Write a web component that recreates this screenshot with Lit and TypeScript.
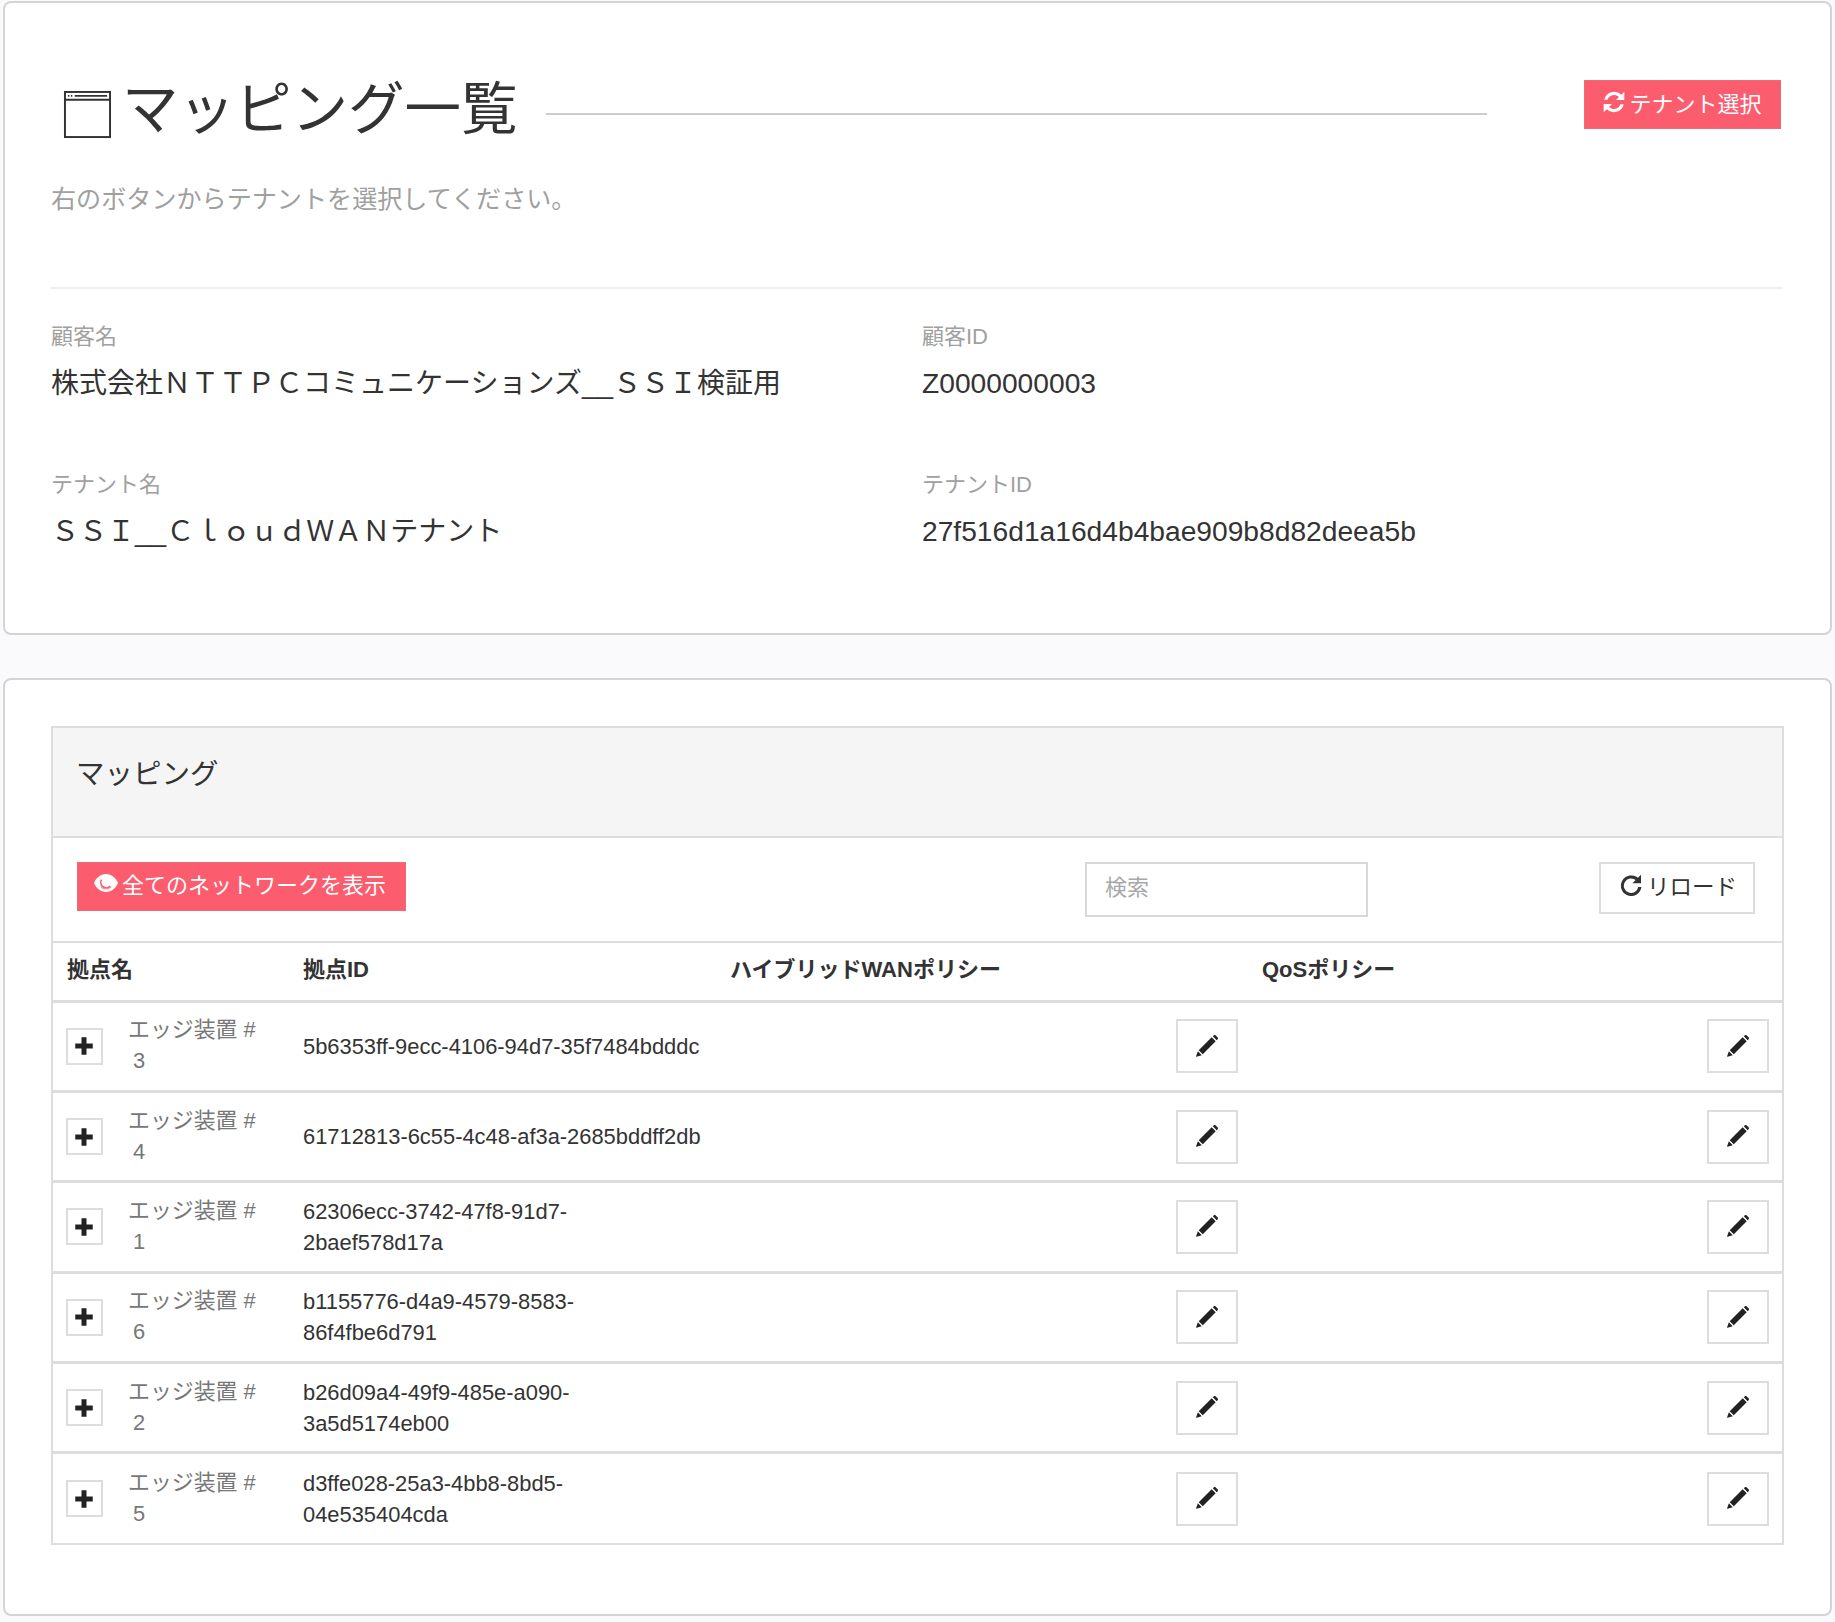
import { LitElement, html, css, svg } from 'lit'
import { customElement } from 'lit/decorators.js'

const rows = [
  { no: '3', id: ['5b6353ff-9ecc-4106-94d7-35f7484bdddc'] },
  { no: '4', id: ['61712813-6c55-4c48-af3a-2685bddff2db'] },
  { no: '1', id: ['62306ecc-3742-47f8-91d7-', '2baef578d17a'] },
  { no: '6', id: ['b1155776-d4a9-4579-8583-', '86f4fbe6d791'] },
  { no: '2', id: ['b26d09a4-49f9-485e-a090-', '3a5d5174eb00'] },
  { no: '5', id: ['d3ffe028-25a3-4bb8-8bd5-', '04e535404cda'] },
]

const pencil = svg`<path d="M11.6 1.6 14.4 4.4 5.4 13.4 2.6 10.6ZM12.4.8 13 .3c.4-.4 1-.4 1.4 0l1.3 1.3c.4.4.4 1 0 1.4l-.6.6ZM2 11.3 4.7 14 1 15.2.7 14.9Z" fill="currentColor"/>`
const plus = svg`<path d="M6 1h4v5h5v4h-5v5H6v-5H1V6h5Z" fill="currentColor"/>`
const refresh = svg`<path d="M13.3 2.7 15.5.5v6h-6l2.100-2.100A5 5 0 0 0 3.300 6.300H.9a7.400 7.400 0 0 1 12.400-3.600ZM2.700 13.300.5 15.500v-6h6l-2.100 2.100a5 5 0 0 0 8.300-1.900h2.400a7.400 7.400 0 0 1-12.400 3.600Z" fill="currentColor"/>`
const eye = svg`<path d="M8 2c3.700 0 6.700 2.700 8 6-1.300 3.300-4.300 6-8 6S1.300 11.300 0 8c1.300-3.300 4.300-6 8-6Z" fill="currentColor"/><path d="M5 5.800a3.600 3.600 0 0 0 5.800 4.200" fill="none" stroke="#fb5c6e" stroke-width="1.100"/><path d="M4.400 10.500a5 5 0 0 0 7.200 0" fill="none" stroke="#fb5c6e" stroke-width=".5"/>`
const reload = svg`<path d="M13 2.800 15.300.5v6.300H9l2.400-2.400A5.300 5.300 0 1 0 13.300 9.500h2.300A7.500 7.500 0 1 1 13 2.800Z" fill="currentColor"/>`

@customElement('app-root')
export class AppRoot extends LitElement {
  static styles = css`
    :host {
      display: block;
      width: 1835px;
      height: 1622px;
      box-sizing: border-box;
      padding: 1px 3px 0 3px;
      background: #fafafc;
      color: #333;
      font-family: 'Liberation Sans', 'Noto Sans CJK JP', sans-serif;
      font-size: 22px;
    }

    .card {
      box-sizing: border-box;
      background: #fff;
      border: 2px solid #d4d4d4;
      border-radius: 8px;
    }

    .summary {
      height: 634px;
      margin-bottom: 43px;
      padding: 77px 47px 0 46px;
    }

    .title-row {
      display: flex;
      align-items: center;
      height: 62px;
    }

    .page-icon {
      width: 49px;
      height: 49px;
      margin: 7px 0 0 12px;
      flex: none;
      color: #333;
    }

    h1 {
      margin: -3px 0 0 10px;
      font-size: 56.500px;
      font-weight: 400;
      line-height: 62px;
      white-space: nowrap;
    }

    .rule {
      width: 941px;
      height: 2px;
      margin: 6px 0 0 28px;
      background: #ccc;
    }

    .btn {
      display: flex;
      align-items: center;
      box-sizing: border-box;
      height: 49px;
      padding-bottom: 4px;
      font-size: 22px;
      white-space: nowrap;
    }

    .btn svg {
      width: 22px;
      height: 22px;
      flex: none;
      margin-right: 3px;
    }

    .primary {
      background: #fb5c6e;
      color: #fff;
      border: 1px solid #ef6a78;
    }

    .tenant {
      width: 197px;
      margin: -14px 0 0 97px;
      padding-left: 18px;
    }

    .tenant svg {
      margin-right: 5px;
    }

    .hint {
      margin: 39px 0 0;
      color: #a0a0a0;
      font-size: 25.100px;
      line-height: 36px;
    }

    hr {
      margin: 70px 0 0;
      border: 0;
      border-top: 2px solid #eee;
    }

    .facts {
      display: grid;
      grid-template-columns: 871px 1fr;
      row-gap: 68px;
      margin-top: 32px;
    }

    .fact-label {
      color: #a0a0a0;
      font-size: 22px;
      line-height: 32px;
    }

    .fact-value {
      margin-top: 14px;
      color: #333;
      font-size: 28px;
      line-height: 34px;
      white-space: nowrap;
    }

    .fact-value.latin {
      margin-top: 13px;
      font-size: 28.200px;
    }

    .mapping {
      height: 938px;
      padding: 46px 46px 0 46px;
    }

    .panel {
      border: 2px solid #ddd;
    }

    h2 {
      box-sizing: border-box;
      height: 110px;
      margin: 0;
      padding: 26px 23px 0;
      background: #f5f5f5;
      border-bottom: 2px solid #ddd;
      font-size: 28.500px;
      font-weight: 400;
      line-height: 40px;
    }

    .toolbar {
      display: flex;
      align-items: flex-start;
      box-sizing: border-box;
      height: 103px;
      padding: 24px 0 0 24px;
    }

    .show-all {
      width: 329px;
      padding: 0 0 7px 16px;
    }

    .show-all svg {
      width: 24px;
      height: 24px;
      margin-right: 4px;
    }

    .search {
      box-sizing: border-box;
      width: 283px;
      height: 55px;
      margin-left: 679px;
      padding: 0 18px;
      border: 2px solid #d8d8d8;
      color: #a8a8a8;
      font-size: 22px;
      line-height: 48px;
    }

    .reload {
      width: 156px;
      height: 52px;
      margin-left: 231px;
      padding: 0 0 7px 19px;
      border: 2px solid #ddd;
      color: #333;
      font-size: 22.500px;
    }

    .reload svg {
      margin-right: 5px;
    }

    table {
      width: 100%;
      border-collapse: collapse;
      table-layout: fixed;
    }

    .col-name {
      width: 236px;
    }

    .col-id {
      width: 427px;
    }

    .col-wan {
      width: 532px;
    }

    th {
      box-sizing: border-box;
      height: 59px;
      padding: 0 14px 9px;
      border-top: 2px solid #ddd;
      border-bottom: 3px solid #ddd;
      color: #333;
      font-size: 22px;
      font-weight: 700;
      text-align: left;
      white-space: nowrap;
    }

    td {
      box-sizing: border-box;
      height: 90.400px;
      padding: 0 14px;
      border-bottom: 3px solid #ddd;
      font-size: 21.900px;
      line-height: 31px;
      white-space: nowrap;
    }

    tr:last-child td {
      border-bottom: 0;
    }

    td.name-col {
      padding-left: 13px;
    }

    .name-cell {
      display: flex;
      align-items: center;
    }

    .expand {
      display: flex;
      align-items: center;
      justify-content: center;
      box-sizing: border-box;
      width: 37px;
      height: 37px;
      padding-right: 2px;
      border: 2px solid #ddd;
      color: #222;
    }

    .expand svg {
      width: 20px;
      height: 20px;
    }

    .name {
      margin-left: 25px;
      padding-bottom: 2px;
      color: #777;
    }

    .name div + div {
      padding-left: 5px;
    }

    .edit-cell {
      padding-right: 10px;
    }

    .edit-cell.last {
      padding-right: 13px;
    }

    .edit {
      display: flex;
      align-items: center;
      justify-content: center;
      box-sizing: border-box;
      width: 62px;
      height: 54px;
      margin-left: auto;
      padding-right: 2px;
      border: 2px solid #ddd;
      color: #222;
    }

    .edit svg {
      width: 23px;
      height: 23px;
    }
  `

  render() {
    return html`
      <section class="card summary">
        <div class="title-row">
          <svg class="page-icon" viewBox="0 0 50 50" fill="none" stroke="currentColor" stroke-width="2">
            <rect x="2" y="2" width="46" height="46" />
            <path d="M2 10h46M12 6h33M5 6h1.500M8 6h1.500" />
          </svg>
          <h1>マッピング一覧</h1>
          <div class="rule"></div>
          <div class="btn primary tenant">
            <svg viewBox="0 0 16 16">${refresh}</svg>テナント選択
          </div>
        </div>
        <p class="hint">右のボタンからテナントを選択してください。</p>
        <hr />
        <div class="facts">
          <div>
            <div class="fact-label">顧客名</div>
            <div class="fact-value">株式会社ＮＴＴＰＣコミュニケーションズ__ＳＳＩ検証用</div>
          </div>
          <div>
            <div class="fact-label">顧客ID</div>
            <div class="fact-value latin">Z0000000003</div>
          </div>
          <div>
            <div class="fact-label">テナント名</div>
            <div class="fact-value">ＳＳＩ__ＣｌｏｕｄＷＡＮテナント</div>
          </div>
          <div>
            <div class="fact-label">テナントID</div>
            <div class="fact-value latin">27f516d1a16d4b4bae909b8d82deea5b</div>
          </div>
        </div>
      </section>

      <section class="card mapping">
        <div class="panel">
          <h2>マッピング</h2>
          <div class="toolbar">
            <div class="btn primary show-all">
              <svg viewBox="0 0 16 16">${eye}</svg>全てのネットワークを表示
            </div>
            <div class="search">検索</div>
            <div class="btn reload">
              <svg viewBox="0 0 16 16">${reload}</svg>リロード
            </div>
          </div>
          <table>
            <colgroup>
              <col class="col-name" />
              <col class="col-id" />
              <col class="col-wan" />
              <col />
            </colgroup>
            <thead>
              <tr>
                <th>拠点名</th>
                <th>拠点ID</th>
                <th>ハイブリッドWANポリシー</th>
                <th>QoSポリシー</th>
              </tr>
            </thead>
            <tbody>
              ${rows.map(
                row => html`
                  <tr>
                    <td class="name-col">
                      <div class="name-cell">
                        <div class="expand"><svg viewBox="0 0 16 16">${plus}</svg></div>
                        <div class="name">
                          <div>エッジ装置 #</div>
                          <div>${row.no}</div>
                        </div>
                      </div>
                    </td>
                    <td>${row.id.map(line => html`<div>${line}</div>`)}</td>
                    <td class="edit-cell">
                      <div class="edit"><svg viewBox="0 0 16 16">${pencil}</svg></div>
                    </td>
                    <td class="edit-cell last">
                      <div class="edit"><svg viewBox="0 0 16 16">${pencil}</svg></div>
                    </td>
                  </tr>
                `
              )}
            </tbody>
          </table>
        </div>
      </section>
    `
  }
}

declare global {
  interface HTMLElementTagNameMap {
    'app-root': AppRoot
  }
}
